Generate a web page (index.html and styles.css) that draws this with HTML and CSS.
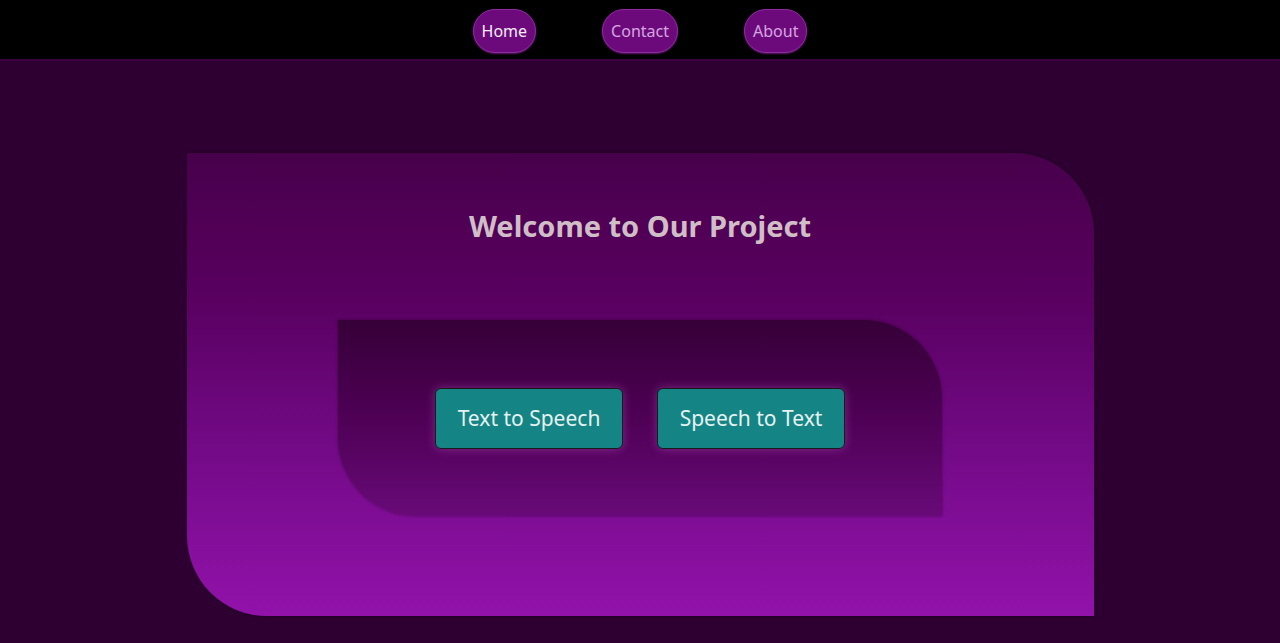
FILE: index.html
```html
<!DOCTYPE html>
<html lang="en">
<head>
<meta charset="utf-8">
<title>Our Project</title>
<link rel="stylesheet" href="styles.css">
</head>
<body>
<nav class="topnav">
  <a class="nav-btn active" href="#">Home</a>
  <a class="nav-btn" href="#">Contact</a>
  <a class="nav-btn" href="#">About</a>
</nav>
<main class="page">
  <section class="card">
    <h1 class="title">Welcome to Our Project</h1>
    <div class="panel">
      <button class="action">Text to Speech</button>
      <button class="action">Speech to Text</button>
    </div>
  </section>
</main>
</body>
</html>
```
FILE: styles.css
```css
* { box-sizing: border-box; }
html, body {
  margin: 0;
  height: 100%;
}
body {
  background: #2e0032;
  font-family: "Noto Sans", "Open Sans", sans-serif;
  overflow: hidden;
}
.topnav {
  height: 61px;
  background: #000;
  border-bottom: 2px solid #3c003f;
  display: flex;
  justify-content: center;
  align-items: flex-start;
  gap: 66px;
  padding-top: 9px;
}
.nav-btn {
  height: 44px;
  padding: 0 8px;
  display: flex;
  align-items: center;
  justify-content: center;
  border-radius: 22px;
  background: #6c0a7c;
  border: 1.5px solid #8e2aa0;
  box-shadow: 0 1px 2px rgba(160, 40, 180, 0.6);
  color: #d6a6e0;
  font-size: 16px;
  text-decoration: none;
}
.nav-btn.active { color: #f4ecf6; }
.page {
  padding-top: 92px;
}
.card {
  width: 907px;
  height: 463px;
  margin: 0 auto;
  border-radius: 0 80px 0 80px;
  background: linear-gradient(to bottom, #48004b 0%, #58005f 30%, #740a88 65%, #9212aa 100%);
  display: flex;
  flex-direction: column;
  align-items: center;
  box-shadow: 0 0 4px rgba(20, 0, 20, 0.6);
}
.title {
  margin: 53px 0 0;
  height: 114px;
  color: #cfbec6;
  font-size: 29px;
  font-weight: 700;
}
.panel {
  width: 604px;
  height: 196px;
  border-radius: 0 78px 0 78px;
  background: linear-gradient(to bottom, #360038 0%, #4c0052 45%, #680a78 100%);
  display: flex;
  justify-content: center;
  align-items: center;
  gap: 34px;
  box-shadow: 0 0 3px rgba(30, 0, 30, 0.5);
}
.action {
  width: 188px;
  height: 61px;
  border-radius: 6px;
  background: #158484;
  border: 1.5px solid #1a1a1a;
  color: #e6f2f2;
  font-family: "Noto Sans", "Open Sans", sans-serif;
  font-size: 21px;
  padding: 0;
  box-shadow: 0 0 10px rgba(190, 90, 200, 0.45);
}
```
